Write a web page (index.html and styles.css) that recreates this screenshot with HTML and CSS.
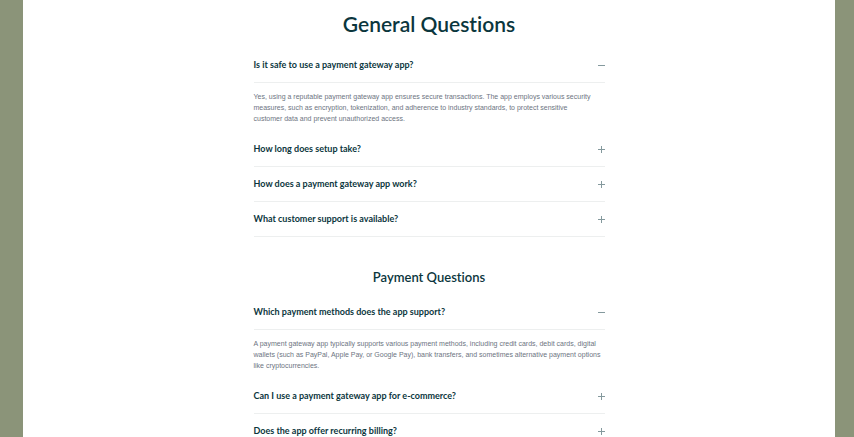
FILE: index.html
```html
<!DOCTYPE html>
<html lang="en">
<head>
<meta charset="utf-8">
<meta name="viewport" content="width=device-width, initial-scale=1">
<title>General Questions</title>
<link rel="stylesheet" href="styles.css">
</head>
<body>
<main class="page">
  <section class="faq">
    <h1 class="title">General Questions</h1>
    <h3 class="item"><button class="question" type="button" aria-expanded="true" aria-controls="a1">Is it safe to use a payment gateway app?<svg class="icon" viewBox="0 0 7 7" aria-hidden="true"><path d="M0 3.5h7"/></svg></button></h3>
    <p class="answer" id="a1">Yes, using a reputable payment gateway app ensures secure transactions. The app employs various security measures, such as encryption, tokenization, and adherence to industry standards, to protect sensitive<br>customer data and prevent unauthorized access.</p>
    <h3 class="item"><button class="question" type="button" aria-expanded="false">How long does setup take?<svg class="icon" viewBox="0 0 7 7" aria-hidden="true"><path d="M0 3.5h7M3.5 0v7"/></svg></button></h3>
    <h3 class="item"><button class="question" type="button" aria-expanded="false">How does a payment gateway app work?<svg class="icon" viewBox="0 0 7 7" aria-hidden="true"><path d="M0 3.5h7M3.5 0v7"/></svg></button></h3>
    <h3 class="item"><button class="question" type="button" aria-expanded="false">What customer support is available?<svg class="icon" viewBox="0 0 7 7" aria-hidden="true"><path d="M0 3.5h7M3.5 0v7"/></svg></button></h3>
  </section>
  <section class="faq">
    <h2 class="subtitle">Payment Questions</h2>
    <h3 class="item"><button class="question" type="button" aria-expanded="true" aria-controls="a2">Which payment methods does the app support?<svg class="icon" viewBox="0 0 7 7" aria-hidden="true"><path d="M0 3.5h7"/></svg></button></h3>
    <p class="answer" id="a2">A payment gateway app typically supports various payment methods, including credit cards, debit cards, digital wallets (such as PayPal, Apple Pay, or Google Pay), bank transfers, and sometimes alternative payment options like cryptocurrencies.</p>
    <h3 class="item"><button class="question" type="button" aria-expanded="false">Can I use a payment gateway app for e-commerce?<svg class="icon" viewBox="0 0 7 7" aria-hidden="true"><path d="M0 3.5h7M3.5 0v7"/></svg></button></h3>
    <h3 class="item"><button class="question" type="button" aria-expanded="false">Does the app offer recurring billing?<svg class="icon" viewBox="0 0 7 7" aria-hidden="true"><path d="M0 3.5h7M3.5 0v7"/></svg></button></h3>
  </section>
</main>
</body>
</html>
```
FILE: styles.css
```css
* {
  box-sizing: border-box;
}

body {
  margin: 0;
  padding: 0 19px 0 23px;
  background: #8b9479;
  color: #0b363d;
  font-family: Lato, "Liberation Sans", sans-serif;
}

.page {
  min-height: 100vh;
  background: #fff;
  font-variant-ligatures: none;
}

.faq {
  max-width: 351px;
  margin: 0 auto;
}

.title,
.subtitle {
  margin: 0;
  text-align: center;
  font-weight: 600;
}

.title {
  padding: 12px 0 12px;
  font-size: 21px;
  line-height: 24px;
}

.subtitle {
  padding: 31px 0 9px;
  font-size: 13px;
  line-height: 18px;
}

.item {
  margin: 0;
  border-bottom: 1px solid #edefef;
}

.question {
  display: flex;
  align-items: center;
  justify-content: space-between;
  width: 100%;
  height: 34px;
  padding: 0;
  border: 0;
  background: none;
  color: inherit;
  font: 700 9px/12px Lato, "Liberation Sans", sans-serif;
  font-variant-ligatures: none;
  text-align: left;
  cursor: pointer;
}

.icon {
  flex: none;
  width: 7px;
  height: 7px;
  fill: none;
  stroke: #84999d;
}

.answer {
  margin: 0;
  padding: 8px 0;
  color: #6d747f;
  font-family: "Liberation Sans", sans-serif;
  font-size: 7px;
  line-height: 11px;
}
```
